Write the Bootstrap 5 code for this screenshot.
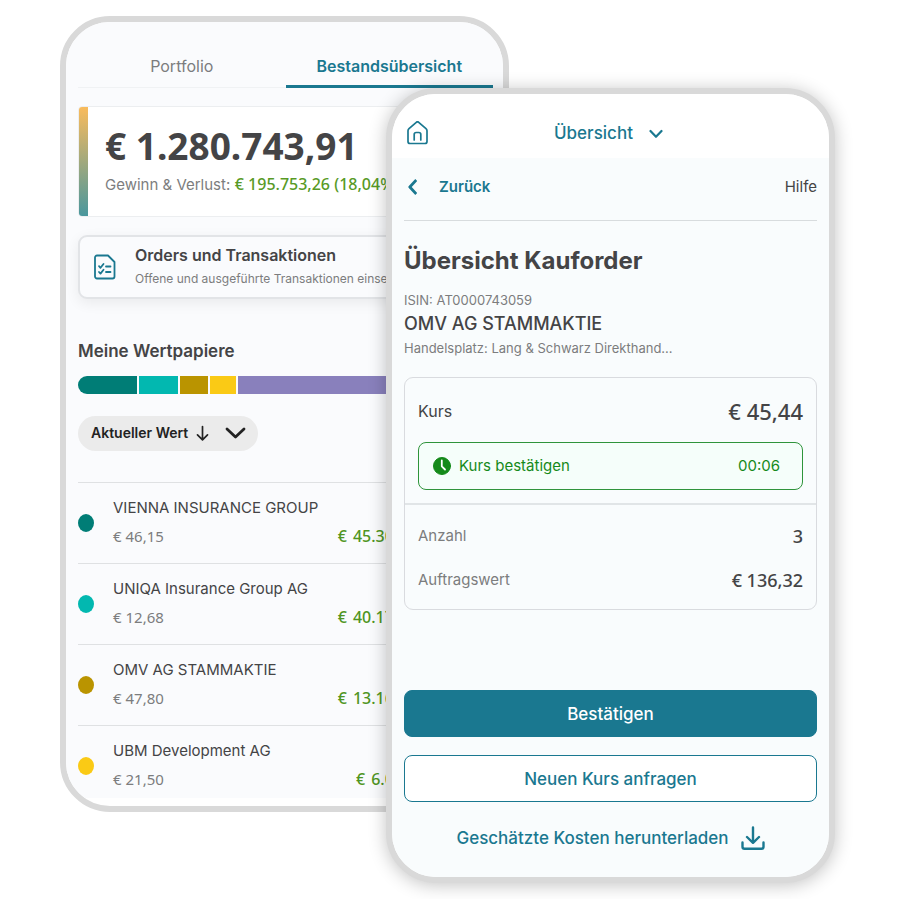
<!DOCTYPE html>
<html lang="de">
<head>
<meta charset="utf-8">
<meta name="viewport" content="width=device-width, initial-scale=1">
<title>Bestandsübersicht und Kauforder</title>
<link href="https://cdn.jsdelivr.net/npm/bootstrap@5.3.0/dist/css/bootstrap.min.css" rel="stylesheet">
<style>
  :root { --teal: #1a7890; --ink: #444446; --muted: #7c7d7e; --gain: #589a26; --ok: #158a1a; --frame: #d9d9d9; }
  body { font-family: Inter, "Noto Sans", sans-serif; font-size: 15px; line-height: 24px; color: var(--ink); background: #fff; }
  a { text-decoration: none; }
  svg { display: block; flex: none; fill: none; stroke: currentColor; stroke-linecap: round; stroke-linejoin: round; }
  .num { font-family: "Noto Sans", sans-serif; }
  .teal { color: var(--teal); }
  .muted { color: var(--muted); }
  .fs-12 { font-size: 12px; } .fs-13 { font-size: 13px; } .fs-15 { font-size: 15px; } .fs-16 { font-size: 16px; }
  .fs-17 { font-size: 17px; } .fs-18 { font-size: 18px; }
  .semi { font-weight: 600; } .medium { font-weight: 500; }

  /* two overlapping phones */
  .stage { display: grid; grid-template-columns: minmax(0,60fr) minmax(0,326fr) minmax(0,123fr) minmax(0,326fr) minmax(0,65fr); align-items: start; padding: 16px 0; }
  .phone { grid-row: 1; border: 6px solid var(--frame); border-radius: 50px; background: #fff; overflow: hidden; }
  .phone-back { grid-column: 2 / 4; padding-bottom: 8px; }
  .phone-front { grid-column: 3 / 5; margin-top: 72px; z-index: 1; box-shadow: 0 2px 18px rgba(0,0,0,.24); }
  .screen-back { background: #fafbfd; padding: 32px 10px 0 12px; }
  .screen-front { background: #f9fcfd; padding: 0 12px 27px; }

  .tabs .nav-link { padding: 0 0 7px; border-bottom: 3px solid transparent; color: var(--muted); font-size: 16px; background: linear-gradient(#f0f2f4,#f0f2f4) bottom / 100% 1px no-repeat border-box; }
  .tabs .nav-link.active { color: var(--teal); border-color: var(--teal); font-weight: 600; }

  .total { position: relative; margin-top: 18px; padding: 15px 0 17px 26px; background: #fff; border: 1px solid #eceef0; border-radius: 4px; overflow: hidden; }
  .total::before { content: ""; position: absolute; inset: 0 auto 0 0; width: 9px; background: linear-gradient(#f9bb5c, #4a979d); }
  .total-sum { font-size: 37px; line-height: 48px; font-weight: 700; }
  .total-gain { line-height: 28px; color: var(--gain); font-size: 16px; }

  .orders { margin-top: 18px; padding: 6px 14px; border: 2px solid #e2e4e7; border-radius: 9px; color: inherit; box-shadow: 0 4px 14px rgba(0,0,0,.07); gap: 19px; background: #fafbfd; }
  .papers { margin: 40px 0 13px; font-size: 17px; line-height: 24px; font-weight: 600; }
  .split { height: 18px; gap: 2px; border-radius: 9px; overflow: hidden; }
  .sorter { margin: 22px 0 31px; padding: 5px 12px 6px 13px; border: 0; border-radius: 18px; background: #ebebeb; color: #222; font-size: 14px; line-height: 24px; font-weight: 600; }

  .holding { border-top: 1px solid #dfe1e3; padding: 10px 0 12px; gap: 19px; }
  .holding:last-child { padding-bottom: 4px; }
  .holding p { line-height: 29px; }
  .spot { width: 16px; height: 18px; border-radius: 50%; margin-top: 21px; }
  .worth { color: #4f9522; gap: 6px; margin-right: 90px; }

  .top-bar { background: #fff; height: 64px; padding: 15px 15px 0; }
  .home-link { padding-top: 12px; }
  .bar-end { width: 25px; }
  .back-bar { padding: 17px 0 21px; border-bottom: 1px solid #d8dcde; }
  .back-link { gap: 22px; }
  .order-title { margin: 23px 0 10px; font-size: 24px; line-height: 34px; font-weight: 700; }
  .quote { margin-top: 17px; border: 1px solid #d9dbdf; border-radius: 9px; }
  .quote-top { padding: 17px 13px 13px; border-bottom: 2px solid #e1e5e7; }
  .quote-top dl { line-height: 32px; margin-bottom: 15px; }
  .quote-rest { padding: 9px 13px 7px; line-height: 44px; }
  dt, dd { font-weight: inherit; margin: 0; }
  .price { font-size: 22px; font-weight: 500; }
  .confirm { height: 48px; padding: 0 22px 0 14px; border: 1px solid #2f943b; border-radius: 8px; background: #f5fefa; color: var(--ok); }
  .actions { margin-top: 80px; gap: 18px; }
  .actions .btn { --bs-btn-border-radius: 8px; height: 47px; padding: 0; font-size: 17px; line-height: 24px; font-weight: 500; border: 1px solid var(--teal); }
  .btn-fill, .btn-fill:hover { background: var(--teal); color: #fff; }
  .btn-line, .btn-line:hover { background: #fff; color: var(--teal); }
  .download { margin-top: 24px; gap: 12px; font-weight: 500; }
</style>
<script src="https://cdn.jsdelivr.net/npm/bootstrap@5.3.0/dist/js/bootstrap.bundle.min.js"></script>
</head>
<body>
<main class="stage">

  <section class="phone phone-back" aria-label="Bestandsübersicht">
    <div class="screen-back">
      <nav class="nav nav-fill nav-justified tabs">
        <a class="nav-link" href="#">Portfolio</a>
        <a class="nav-link active" href="#" aria-current="page">Bestandsübersicht</a>
      </nav>

      <div class="total">
        <div class="total-sum num text-nowrap">€ 1.280.743,91</div>
        <div class="total-gain text-nowrap"><span class="muted fs-15">Gewinn &amp; Verlust:</span> <span class="num medium">€ 195.753,26 (18,04%)</span></div>
      </div>

      <a href="#" class="orders d-flex align-items-center">
        <svg class="teal" width="22" height="26" viewBox="0 0 22 26" stroke-width="1.8"><path d="M3 1.500h11L20.500 8v14.500a2 2 0 0 1-2 2H3a2 2 0 0 1-2-2v-19a2 2 0 0 1 2-2z"/><path d="M5 12.200l1.500 1.600 3-3.800M5 18l1.500 1.600 3-3.800M12 12.500h4.500M12 18h4.500"/></svg>
        <span class="d-block text-nowrap overflow-hidden">
          <span class="d-block fs-16 semi">Orders und Transaktionen</span>
          <span class="d-block fs-12 text-truncate muted">Offene und ausgeführte Transaktionen einsehen</span>
        </span>
      </a>

      <h2 class="papers">Meine Wertpapiere</h2>
      <div class="split d-flex" role="img" aria-label="Aufteilung der Wertpapiere">
        <span style="background:#007d76;flex:59 0 0"></span>
        <span style="background:#02b8b0;flex:39 0 0"></span>
        <span style="background:#ba9400;flex:28 0 0"></span>
        <span style="background:#faca15;flex:26 0 0"></span>
        <span style="background:#8980bc;flex:255 0 0"></span>
      </div>

      <button type="button" class="sorter d-flex align-items-center">
        <span>Aktueller Wert</span>
        <svg class="ms-2" width="13" height="16" viewBox="0 0 13 16" stroke-width="1.700"><path d="M6.500 1.500v13M1.500 9.800l5 5 5-5"/></svg>
        <svg class="ms-3" width="21" height="14" viewBox="0 0 21 14" stroke="#000" stroke-width="2.800" stroke-linecap="square"><path d="M2 3l8.500 8L19 3"/></svg>
      </button>

      <ul class="list-unstyled mb-0">
        <li class="holding d-flex">
          <span class="spot" style="background:#007d76"></span>
          <div class="flex-fill"><p class="mb-0">VIENNA INSURANCE GROUP</p>
            <p class="mb-0 d-flex justify-content-between num"><span class="muted">€ 46,15</span><span class="worth d-flex fs-16 medium"><span>€</span><span>45.305</span></span></p></div>
        </li>
        <li class="holding d-flex">
          <span class="spot" style="background:#02b8b0"></span>
          <div class="flex-fill"><p class="mb-0">UNIQA Insurance Group AG</p>
            <p class="mb-0 d-flex justify-content-between num"><span class="muted">€ 12,68</span><span class="worth d-flex fs-16 medium"><span>€</span><span>40.170</span></span></p></div>
        </li>
        <li class="holding d-flex">
          <span class="spot" style="background:#ba9400"></span>
          <div class="flex-fill"><p class="mb-0">OMV AG STAMMAKTIE</p>
            <p class="mb-0 d-flex justify-content-between num"><span class="muted">€ 47,80</span><span class="worth d-flex fs-16 medium"><span>€</span><span>13.160</span></span></p></div>
        </li>
        <li class="holding d-flex">
          <span class="spot" style="background:#faca15"></span>
          <div class="flex-fill"><p class="mb-0">UBM Development AG</p>
            <p class="mb-0 d-flex justify-content-between num"><span class="muted">€ 21,50</span><span class="worth d-flex fs-16 medium"><span>€</span><span>6.06</span></span></p></div>
        </li>
      </ul>
    </div>
  </section>

  <section class="phone phone-front" aria-label="Kauforder">
    <header class="top-bar d-flex align-items-start">
      <a href="#" class="teal home-link" aria-label="Startseite"><svg width="21" height="24" viewBox="0 0 21 24" stroke-width="1.700"><path d="M9.300 1.300a1.800 1.800 0 0 1 2.400 0l7.300 6.300a3 3 0 0 1 1 2.200v10.700a2 2 0 0 1-2 2H3a2 2 0 0 1-2-2V9.800a3 3 0 0 1 1-2.200z"/><path d="M7.200 19v-5.500a2 2 0 0 1 2-2h2.600a2 2 0 0 1 2 2V19"/></svg></a>
      <button type="button" class="btn border-0 p-0 pt-2 mt-1 mx-auto d-flex align-items-center teal fs-17 medium lh-base">Übersicht<svg class="ms-3" width="14" height="10" viewBox="0 0 14 10" stroke-width="2.200"><path d="M1.500 2L7 7.800 12.500 2"/></svg></button>
      <span class="bar-end"></span>
    </header>

    <div class="screen-front">
      <div class="back-bar d-flex justify-content-between align-items-center">
        <a href="#" class="teal semi d-flex align-items-center back-link"><svg class="ms-1" width="9" height="16" viewBox="0 0 9 16" stroke-width="2.800"><path d="M8.300 1L1.800 8l6.500 7" stroke-linecap="butt"/></svg>Zurück</a>
        <a href="#" class="text-reset">Hilfe</a>
      </div>

      <h1 class="order-title">Übersicht Kauforder</h1>
      <div class="fs-13 muted">ISIN: AT0000743059</div>
      <div class="fs-18 medium">OMV AG STAMMAKTIE</div>
      <div class="fs-13 muted">Handelsplatz: Lang &amp; Schwarz Direkthand...</div>

      <div class="quote">
        <div class="quote-top">
          <dl class="d-flex justify-content-between">
            <dt class="fs-16">Kurs</dt><dd class="price num">€ 45,44</dd>
          </dl>
          <button type="button" class="confirm d-flex align-items-center w-100">
            <svg width="18" height="18" viewBox="0 0 18 18" stroke="none"><circle cx="9" cy="9" r="8.500" fill="currentColor"/><path d="M8.800 3.500v5.800l3.200 3.200" fill="none" stroke="#fff" stroke-width="1.800"/></svg>
            <span class="ms-2">Kurs bestätigen</span>
            <span class="ms-auto">00:06</span>
          </button>
        </div>
        <div class="quote-rest">
          <dl class="d-flex justify-content-between mb-0"><dt class="muted">Anzahl</dt><dd class="num fs-18 medium">3</dd></dl>
          <dl class="d-flex justify-content-between mb-0"><dt class="muted">Auftragswert</dt><dd class="num fs-18 medium">€ 136,32</dd></dl>
        </div>
      </div>

      <div class="actions d-grid">
        <button type="button" class="btn btn-fill">Bestätigen</button>
        <button type="button" class="btn btn-line">Neuen Kurs anfragen</button>
      </div>
      <a href="#" class="download teal fs-17 d-flex justify-content-center align-items-center">Geschätzte Kosten herunterladen
        <svg width="24" height="24" viewBox="0 0 24 24" stroke-width="2.400"><path d="M12 1.500v15M6 11l6 5.800L18 11M1.500 16.500v4.300a2 2 0 0 0 2 2h17a2 2 0 0 0 2-2v-4.300"/></svg></a>
    </div>
  </section>

</main>
</body>
</html>
